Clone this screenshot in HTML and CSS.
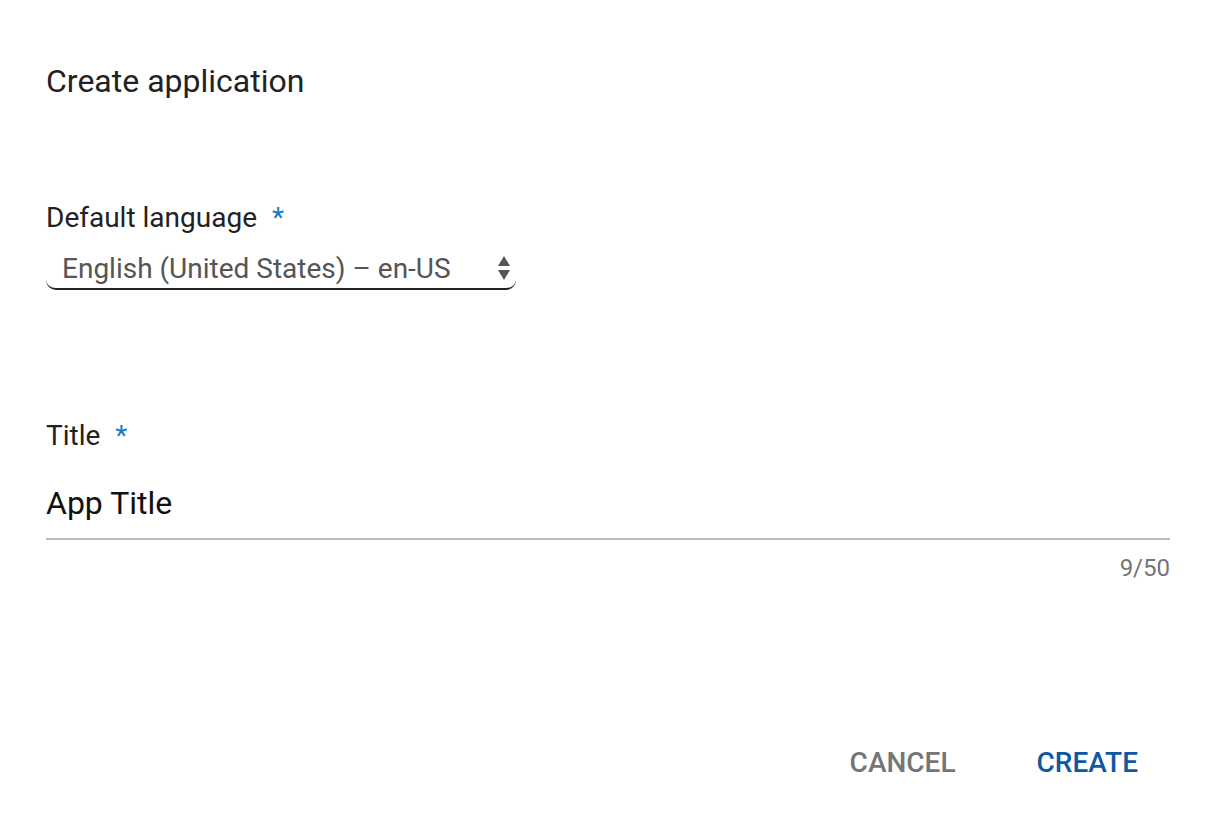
FILE: index.html
```html
<!DOCTYPE html>
<html>
<head>
<meta charset="utf-8">
<link rel="stylesheet" href="styles.css">
</head>
<body>
<div class="dialog">
  <h1 class="heading">Create application</h1>
  <div class="field lang-field">
    <label class="label">Default language <span class="req">*</span></label>
    <div class="select">
      <span class="select-value">English (United States) – en-US</span>
      <svg class="arrows" width="14" height="28" viewBox="0 0 14 28"><path d="M7 2 L13 12 H1 Z" fill="#555"/><path d="M1 16 H13 L7 26 Z" fill="#555"/></svg>
    </div>
  </div>
  <div class="field title-field">
    <label class="label">Title <span class="req">*</span></label>
    <div class="input">App Title</div>
    <div class="counter">9/50</div>
  </div>
  <div class="actions">
    <button class="btn cancel">CANCEL</button>
    <button class="btn create">CREATE</button>
  </div>
</div>
</body>
</html>
```
FILE: styles.css
```css
html, body { margin: 0; padding: 0; background: #fff; }
body { font-family: Roboto, "Noto Sans", sans-serif; color: #212121; }
.dialog { padding: 61px 41px 0 46px; display: flex; flex-direction: column; }
.heading { margin: 0; font-size: 32px; font-weight: 400; line-height: 40px; color: #222; }
.field { display: flex; flex-direction: column; }
.lang-field { margin-top: 99px; width: 470px; }
.label { font-size: 28px; line-height: 36px; color: #222; }
.req { color: #1a7ac4; margin-left: 8px; }
.select { box-sizing: border-box; display: flex; align-items: center; justify-content: space-between; height: 44px; border-bottom: 2px solid #222; border-radius: 0 0 10px 10px; padding: 2px 5px 0 16px; margin-top: 10px; }
.select-value { font-size: 28px; color: #555; }
.arrows { display: block; }
.title-field { margin-top: 128px; }
.input { font-size: 32px; line-height: 40px; color: #111; margin-top: 29px; padding-bottom: 15px; border-bottom: 2px solid #bdbdbd; }
.counter { align-self: flex-end; font-size: 24px; line-height: 28px; color: #757575; margin-top: 14px; }
.actions { display: flex; justify-content: flex-end; gap: 65px; margin-top: 157px; padding-right: 24px; }
.btn { background: none; border: none; font-family: Roboto, sans-serif; font-size: 28px; line-height: 32px; font-weight: 500; padding: 8px; }
.cancel { color: #757575; margin-left: 1px; }
.create { color: #0d59a3; }
```
